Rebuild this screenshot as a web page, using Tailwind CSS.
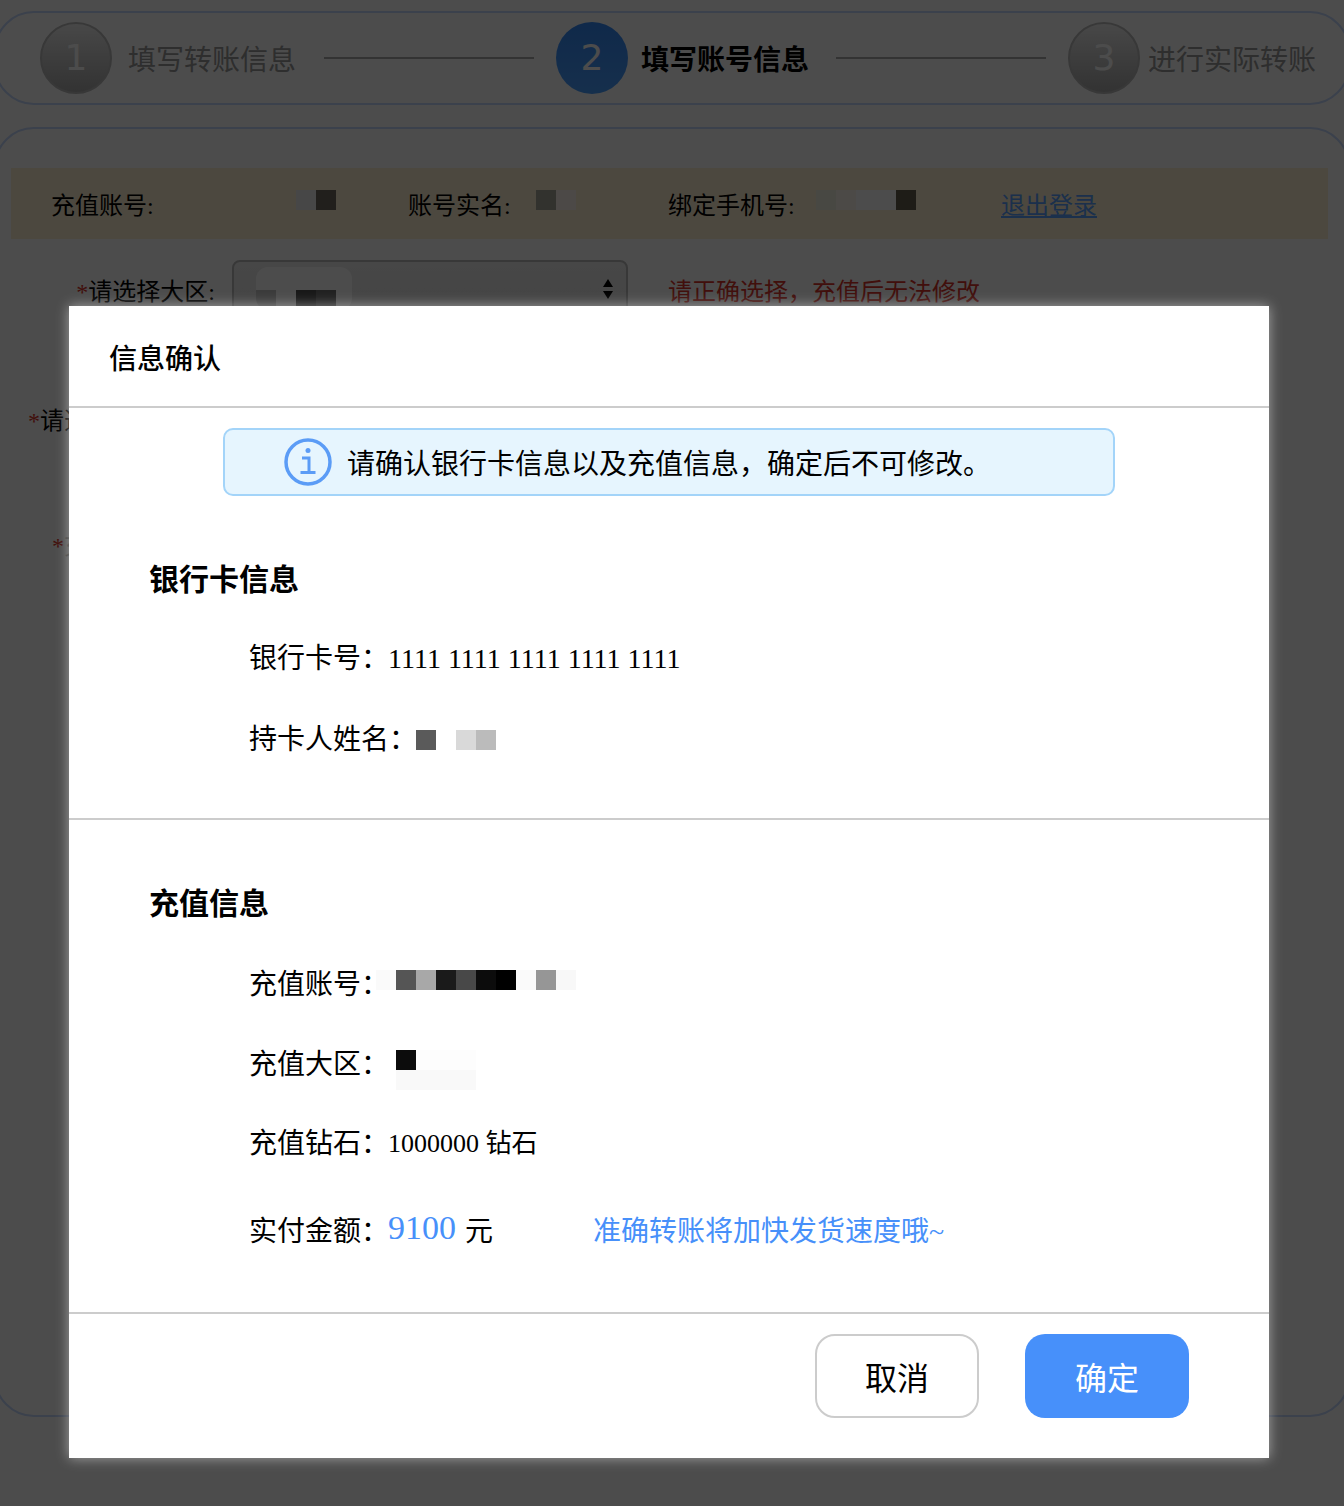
<!DOCTYPE html>
<html lang="zh-CN">
<head>
    <meta charset="UTF-8" />
    <meta name="viewport" content="width=device-width, initial-scale=1.0" />
    <script src="https://cdn.jsdelivr.net/npm/@tailwindcss/browser@4"></script>
    <title>信息确认</title>
</head>
<body class="relative h-[1506px] overflow-hidden bg-white text-black font-['Liberation_Serif','Noto_Sans_CJK_SC',serif]">
    <!-- Page under the dialog -->
    <div class="pt-[11px]">
        <div class="-mx-[6px] flex h-[94px] items-center rounded-[40px] border-2 border-[#c5d9ff] pl-[44px] text-[28px] leading-none">
            <div class="flex h-[72px] w-[72px] items-center justify-center rounded-full border-2 border-[#bbbbbb] bg-gradient-to-b from-[#f0f0f0] to-[#aaaaaa] font-['DejaVu_Sans'] text-[36px] text-white">1</div>
            <span class="ml-4 pt-[6px] text-[#999999]">填写转账信息</span>
            <div class="ml-7 h-0.5 w-[210px] bg-[#aaaaaa]"></div>
            <div class="ml-[22px] flex h-[72px] w-[72px] items-center justify-center rounded-full bg-gradient-to-b from-[#3589f7] to-[#4a9fff] font-['DejaVu_Sans'] text-[36px] text-white">2</div>
            <span class="ml-[13px] pt-[6px] font-semibold">填写账号信息</span>
            <div class="ml-[27px] h-0.5 w-[210px] bg-[#aaaaaa]"></div>
            <div class="ml-[22px] flex h-[72px] w-[72px] items-center justify-center rounded-full border-2 border-[#bbbbbb] bg-gradient-to-b from-[#f0f0f0] to-[#aaaaaa] font-['DejaVu_Sans'] text-[36px] text-white">3</div>
            <span class="ml-2 pt-[6px] text-[#999999]">进行实际转账</span>
        </div>

        <div class="-mx-[6px] mt-[22px] h-[1290px] rounded-[40px] border-2 border-[#c5d9ff] pt-[39px] pl-[15px] pr-[20px]">
            <div class="flex h-[71px] items-center bg-[#fff0d2] pl-[40px] text-2xl leading-none">
                <span class="w-[245px] pt-1">充值账号:</span>
                <div class="-mt-[7px] flex">
                    <i class="h-5 w-5 bg-[#eeeeee]"></i><i class="h-5 w-5 bg-[#6f6a5f]"></i>
                </div>
                <span class="ml-[72px] w-[128px] pt-1">账号实名:</span>
                <div class="-mt-[7px] flex">
                    <i class="h-5 w-5 bg-[#a9a99a]"></i><i class="h-5 w-5 bg-[#fff6ee]"></i>
                </div>
                <span class="ml-[92px] w-[148px] pt-1">绑定手机号:</span>
                <div class="-mt-[7px] flex">
                    <i class="h-5 w-5 bg-[#f0f0e0]"></i><i class="h-5 w-5 bg-[#fff8ee]"></i><i class="h-5 w-10 bg-white"></i><i class="h-5 w-5 bg-[#66604f]"></i>
                </div>
                <a href="#" class="ml-[85px] pt-1 text-[#5aa0ff] underline">退出登录</a>
            </div>

            <div class="mt-[21px] flex h-[120px] items-start text-2xl leading-none">
                <div class="w-[204px] pt-5 text-right"><span class="text-[#d9332b]">*</span>请选择大区:</div>
                <div class="ml-[17px] flex h-[120px] w-[396px] items-start justify-between rounded-lg border-2 border-[#bbbbbb] bg-gradient-to-b from-[#eeeeee] to-[#d8d8d8] pl-[22px] pr-[12px] pt-[5px]">
                    <div class="w-[96px]">
                        <div class="h-[23px] rounded-t-xl bg-white"></div>
                        <div class="flex overflow-hidden rounded-b-xl">
                            <i class="h-5 w-5 bg-[#c5c5c5]"></i><i class="h-5 w-5 bg-white"></i><i class="h-5 w-5 bg-[#535353]"></i><i class="h-5 w-5 bg-[#717171]"></i><i class="h-5 w-4 bg-white"></i>
                        </div>
                    </div>
                    <svg class="mt-[12px] h-[20px] w-3 fill-black" viewBox="0 0 12 20">
                        <path d="M6 0l5 8H1zM6 20l-5-8h10z" />
                    </svg>
                </div>
                <span class="ml-10 pt-5 text-[#d9332b]">请正确选择，充值后无法修改</span>
            </div>
            <div class="mt-[29px] pl-[17px] text-2xl leading-none"><span class="text-[#d9332b]">*</span>请选择</div>
            <div class="mt-[101px] pl-[41px] text-2xl leading-none text-[#aaaaaa]"><span class="text-[#d9332b]">*</span>充值</div>
        </div>
    </div>

    <!-- Overlay -->
    <div class="absolute inset-0 bg-black/70"></div>

    <!-- Dialog -->
    <div class="absolute left-[69px] top-[306px] h-[1152px] w-[1200px] bg-white text-[28px] leading-none shadow-[0_0_12px_rgba(255,255,255,0.5)]">
        <div class="flex h-[102px] items-center border-b-2 border-[#cccccc] pl-10 pt-2 font-medium">信息确认</div>

        <div class="mx-auto mt-5 flex h-[68px] w-[892px] items-center rounded-[10px] border-2 border-[#a3d4f9] bg-[#e6f5fe] pl-[59px]">
            <svg class="h-12 w-12 shrink-0" viewBox="0 0 48 48" fill="none" stroke="#5b9cf6">
                <circle cx="24" cy="24" r="22" stroke-width="3.500" />
                <circle cx="24" cy="12.500" r="2.500" fill="#5b9cf6" stroke="none" />
                <path d="M18 20h7v14M16.500 34.500h15" stroke-width="3" />
            </svg>
            <span class="ml-[15px] pt-[6px]">请确认银行卡信息以及充值信息，确定后不可修改。</span>
        </div>

        <div class="h-[324px] border-b-2 border-[#cccccc] pl-20 pt-[69px]">
            <h3 class="flex h-[30px] items-center text-3xl font-semibold">银行卡信息</h3>
            <div class="mt-[49px] flex h-[30px] items-center pl-[100px]">银行卡号：<span class="-ml-px">1111 1111 1111 1111 1111</span></div>
            <div class="mt-[51px] flex h-[30px] items-center pl-[100px]">持卡人姓名：
                <div class="-ml-px flex"><i class="h-5 w-5 bg-[#5a5a5a]"></i><i class="h-5 w-5 bg-white"></i><i class="h-5 w-5 bg-[#d9d9d9]"></i><i class="h-5 w-5 bg-[#bbbbbb]"></i></div>
            </div>
        </div>

        <div class="h-[494px] border-b-2 border-[#cccccc] pl-20 pt-[69px]">
            <h3 class="flex h-[30px] items-center text-3xl font-semibold">充值信息</h3>
            <div class="mt-[51px] flex h-[30px] items-center pl-[100px]">充值账号：
                <div class="-ml-[13px] -mt-2.5 flex"><i class="h-5 w-5 bg-[#fafafa]"></i><i class="h-5 w-5 bg-[#555555]"></i><i class="h-5 w-5 bg-[#a8a8a8]"></i><i class="h-5 w-5 bg-[#1a1a1a]"></i><i class="h-5 w-5 bg-[#484848]"></i><i class="h-5 w-5 bg-[#0c0c0c]"></i><i class="h-5 w-5 bg-black"></i><i class="h-5 w-5 bg-[#fafafa]"></i><i class="h-5 w-5 bg-[#969696]"></i><i class="h-5 w-5 bg-[#f8f8f8]"></i></div>
            </div>
            <div class="mt-[50px] flex h-[30px] items-center pl-[100px]">充值大区：
                <div class="ml-[7px] mt-2.5 w-20">
                    <div class="flex"><i class="h-5 w-5 bg-[#0c0c0c]"></i><i class="h-5 w-[60px] bg-[#fdfdfd]"></i></div>
                    <div class="h-5 w-20 bg-[#f9f9f9]"></div>
                </div>
            </div>
            <div class="mt-[49px] flex h-[30px] items-center pl-[100px]">充值钻石：<span class="-ml-px text-[26px]">1000000 钻石</span></div>
            <div class="mt-[58px] flex h-[30px] items-center pl-[100px]">实付金额：<span class="-mt-2 -ml-px text-[34px] text-[#4790fa]">9100</span><span class="ml-[9px]">元</span>
                <span class="ml-[100px] text-[#4790fa]">准确转账将加快发货速度哦~</span>
            </div>
        </div>

        <div class="flex justify-end gap-[46px] pt-5 pr-20">
            <button class="h-[84px] w-[164px] rounded-[20px] border-2 border-[#cccccc] bg-white pt-1.5 text-[32px]">取消</button>
            <button class="h-[84px] w-[164px] rounded-[20px] bg-[#4790fa] pt-1.5 text-[32px] text-white">确定</button>
        </div>
    </div>
</body>
</html>
